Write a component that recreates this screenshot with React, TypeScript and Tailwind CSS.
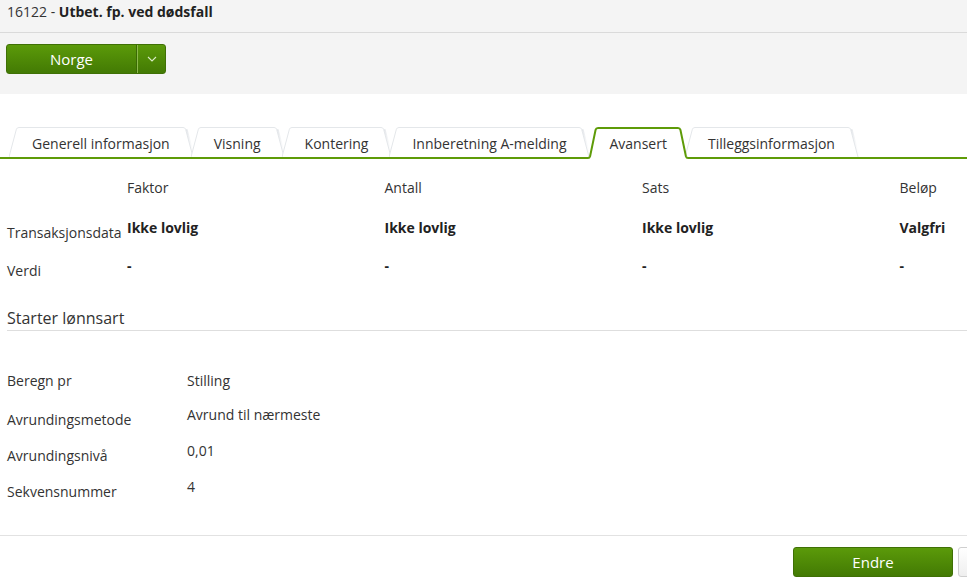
import React from "react";

const GREEN = "#5e9b08";

function LeftSlant({ active }: { active: boolean }) {
  if (active) {
    return (
      <svg width="11" height="32" viewBox="0 0 11 32" className="block shrink-0">
        <path d="M0,32 L0,31 L1,31 Q2.6,31 3.1,29.2 L8.6,2.8 Q9.1,1 11,1 L11,32 Z" fill="#fff" />
        <path d="M0,31 L1,31 Q2.6,31 3.1,29.2 L8.6,2.8 Q9.1,1 11,1" fill="none" stroke={GREEN} strokeWidth="2" />
      </svg>
    );
  }
  return (
    <svg width="10" height="30" viewBox="0 0 10 30" className="block shrink-0">
      <path d="M0,30 L7.4,2.2 Q8,0.5 10,0.5 L10,30 Z" fill="#fff" />
      <path d="M0,30 L7.4,2.2 Q8,0.5 10,0.5" fill="none" stroke="#e4e7ea" strokeWidth="1" />
    </svg>
  );
}

function RightSlant({ active }: { active: boolean }) {
  if (active) {
    return (
      <svg width="11" height="32" viewBox="0 0 11 32" className="block shrink-0">
        <path d="M0,1 Q1.9,1 2.4,2.8 L7.9,29.2 Q8.4,31 10,31 L11,31 L11,32 L0,32 Z" fill="#fff" />
        <path d="M0,1 Q1.9,1 2.4,2.8 L7.9,29.2 Q8.4,31 10,31 L11,31" fill="none" stroke={GREEN} strokeWidth="2" />
      </svg>
    );
  }
  return (
    <svg width="12" height="30" viewBox="0 0 12 30" className="block shrink-0">
      <defs>
        <linearGradient id="sh" x1="0" y1="0" x2="1" y2="0">
          <stop offset="0" stopColor="#d9dde2" stopOpacity="0.9" />
          <stop offset="1" stopColor="#ffffff" stopOpacity="0" />
        </linearGradient>
      </defs>
      <path d="M2.6,2.2 L10,30 L12,30 L4.6,2.2 Z" fill="url(#sh)" />
      <path d="M0,0.5 Q2,0.5 2.6,2.2 L10,30 L0,30 Z" fill="#fff" />
      <path d="M0,0.5 Q2,0.5 2.6,2.2 L10,30" fill="none" stroke="#e4e7ea" strokeWidth="1" />
    </svg>
  );
}

function Tab({ label, active = false, first = false }: { label: string; active?: boolean; first?: boolean }) {
  return (
    <div className={`flex items-end ${first ? "" : "-ml-[4px]"} ${active ? "relative z-10 h-[32px]" : "h-[30px] mb-[2px]"}`}>
      <LeftSlant active={active} />
      <div
        className={`flex items-center self-stretch bg-white text-[14px] text-[#333] ${
          active ? "border-t-2 border-[#5e9b08] px-[11px] pb-[1px]" : "border-t border-[#e4e7ea] px-[13px] pt-[2px]"
        }`}
      >
        {label}
      </div>
      <RightSlant active={active} />
    </div>
  );
}

function Btn({ children, className = "" }: { children: React.ReactNode; className?: string }) {
  return (
    <div
      className={`flex items-center justify-center text-[15px] text-white bg-gradient-to-b from-[#5b9a0a] to-[#437a04] border border-[#3f7005] ${className}`}
    >
      {children}
    </div>
  );
}

export default function App() {
  const cols = [
    { h: "Faktor", v: "Ikke lovlig" },
    { h: "Antall", v: "Ikke lovlig" },
    { h: "Sats", v: "Ikke lovlig" },
    { h: "Beløp", v: "Valgfri" },
  ];
  return (
    <div className="w-[967px] h-[578px] overflow-hidden bg-white text-[#333] text-[14px] leading-[20px]" style={{ fontFamily: '"Open Sans", "Liberation Sans", sans-serif' }}>
      {/* header */}
      <div className="bg-[#f4f4f4] h-[94px]">
        <div className="h-[33px] border-b border-[#dadada] pl-[7px] pt-[2px] text-[14px]">
          <span>16122 - </span>
          <span className="font-bold text-[#222]">Utbet. fp. ved dødsfall</span>
        </div>
        <div className="pl-[6px] pt-[11px]">
          <div className="flex h-[30px] w-[160px] rounded-[3px] overflow-hidden border border-[#3f7005] bg-gradient-to-b from-[#5b9a0a] to-[#437a04]">
            <div className="flex w-[129px] items-center justify-center pb-[1px] text-[15px] text-white">Norge</div>
            <div className="w-[1px] bg-[#3b6a04]" />
            <div className="w-[1px] bg-[#8dbb4d]" />
            <div className="flex flex-1 items-center justify-center">
              <svg width="10" height="6" viewBox="0 0 10 6">
                <path d="M1,1 L5,5 L9,1" fill="none" stroke="#d8ebc4" strokeWidth="1.1" />
              </svg>
            </div>
          </div>
        </div>
      </div>

      {/* tabs */}
      <div className="relative mt-[33px] flex h-[32px] items-end pl-[9px]">
        <div className="absolute bottom-0 left-0 right-0 h-[2px] bg-[#5e9b08]" />
        <Tab label="Generell informasjon" first />
        <Tab label="Visning" />
        <Tab label="Kontering" />
        <Tab label="Innberetning A-melding" />
        <Tab label="Avansert" active />
        <Tab label="Tilleggsinformasjon" />
      </div>

      {/* data grid */}
      <div className="flex pt-[19px]">
        <div className="w-[127px] shrink-0" />
        {cols.map((c) => (
          <div key={c.h} className="w-[257.5px] shrink-0">{c.h}</div>
        ))}
      </div>
      <div className="mt-[20px] flex h-[38px] items-start">
        <div className="w-[127px] shrink-0 pl-[7px] pt-[5px]">Transaksjonsdata</div>
        {cols.map((c) => (
          <div key={c.h} className="w-[257.5px] shrink-0 font-bold text-[#222]">{c.v}</div>
        ))}
      </div>
      <div className="flex h-[25px] items-start">
        <div className="w-[127px] shrink-0 pl-[7px] pt-[5px]">Verdi</div>
        {cols.map((c) => (
          <div key={c.h} className="w-[257.5px] shrink-0 font-bold text-[#222]">-</div>
        ))}
      </div>

      {/* Starter lønnsart */}
      <div className="ml-[7px] mt-[26px] border-b border-[#dedede] pb-[1px] text-[16px] leading-[22px]">Starter lønnsart</div>

      <div className="mt-[40px]">
        <div className="flex h-[34px] items-start">
          <div className="w-[187px] shrink-0 pl-[7px]">Beregn pr</div>
          <div>Stilling</div>
        </div>
        <div className="flex h-[36px] items-start">
          <div className="w-[187px] shrink-0 pl-[7px] pt-[5px]">Avrundingsmetode</div>
          <div>Avrund til nærmeste</div>
        </div>
        <div className="flex h-[36px] items-start">
          <div className="w-[187px] shrink-0 pl-[7px] pt-[5px]">Avrundingsnivå</div>
          <div>0,01</div>
        </div>
        <div className="flex h-[25px] items-start">
          <div className="w-[187px] shrink-0 pl-[7px] pt-[5px]">Sekvensnummer</div>
          <div>4</div>
        </div>
      </div>

      {/* footer */}
      <div className="mt-[33px] flex justify-end gap-[5px] border-t border-[#e2e2e2] pt-[11px]">
        <Btn className="h-[30px] w-[160px] rounded-[3px] pb-[1px]">Endre</Btn>
        <div className="-mr-[70px] h-[30px] w-[79px] rounded-[3px] border border-[#cfcfcf] bg-gradient-to-b from-white to-[#efefef]" />
      </div>
    </div>
  );
}
